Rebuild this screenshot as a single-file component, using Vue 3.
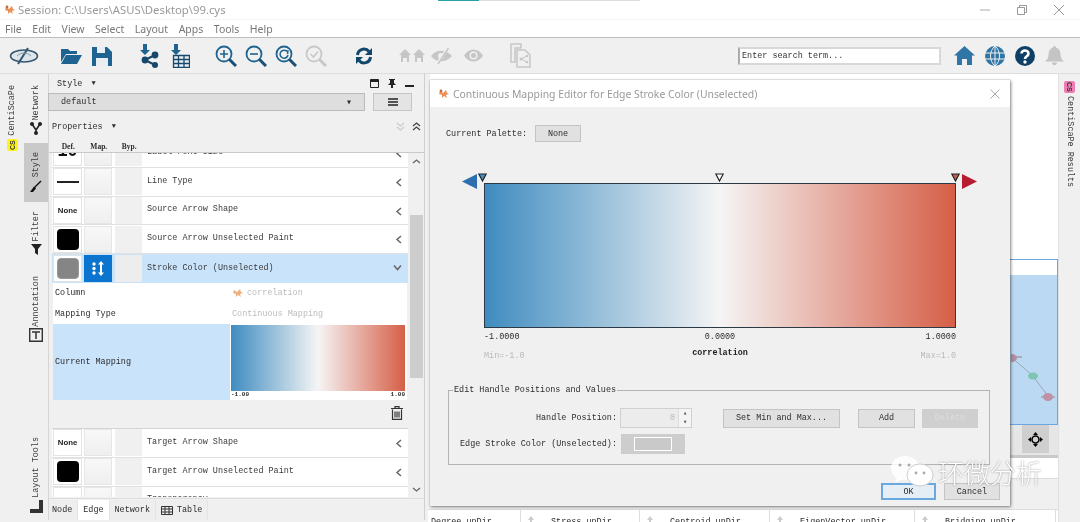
<script setup>
const menus = ['File', 'Edit', 'View', 'Select', 'Layout', 'Apps', 'Tools', 'Help']
const topRows = [
  { label: 'Line Type', def: 'line' },
  { label: 'Source Arrow Shape', def: 'none' },
  { label: 'Source Arrow Unselected Paint', def: 'black' }
]
const bottomRows = [
  { label: 'Target Arrow Shape', def: 'none' },
  { label: 'Target Arrow Unselected Paint', def: 'black' }
]
const tableCols = [
  { name: 'Degree unDir', w: 93, icon: false },
  { name: 'Stress unDir', w: 119, icon: true },
  { name: 'Centroid unDir', w: 130, icon: true },
  { name: 'EigenVector unDir', w: 145, icon: true },
  { name: 'Bridging unDir', w: 141, icon: true }
]
</script>

<template>
  <div class="app">
    <header class="titlebar">
      <svg class="cy" width="12" height="12" viewBox="0 0 12 12"><path d="M2 3l3 2 3-3 1 3 2 1-3 1 1 3-3-2-2 2V7L1 6z" fill="#e8925a"/><circle cx="3" cy="3" r="1.4" fill="#c9673a"/></svg>
      <span class="session">Session: C:\Users\ASUS\Desktop\99.cys</span>
      <div class="tabstrip"><i class="teal"></i><i class="graybar"></i></div>
      <div class="winbtns">
        <svg width="12" height="12" viewBox="0 0 12 12"><path d="M1 6h10" stroke="#aaa"/></svg>
        <svg width="12" height="12" viewBox="0 0 12 12"><path d="M1.500 3.500h7v7h-7zM3.500 3.500v-2h7v7h-2" fill="none" stroke="#999"/></svg>
        <svg width="12" height="12" viewBox="0 0 12 12"><path d="M1 1l10 10M11 1L1 11" stroke="#999"/></svg>
      </div>
    </header>

    <nav class="menubar">
      <span v-for="m in menus" :key="m">{{ m }}</span>
    </nav>

    <div class="toolbar">
      <svg class="t logo" width="30" height="20" viewBox="0 0 30 20"><ellipse cx="15" cy="10" rx="13.500" ry="6" fill="#dfe5ea" stroke="#34586f" stroke-width="1.500"/><path d="M19 2L9 18" stroke="#34586f" stroke-width="2"/><path d="M8 10c4-4 10-4 14 0" fill="none" stroke="#7f98a8"/></svg>
      <svg class="t g1" width="22" height="20" viewBox="0 0 22 20"><path d="M1 3h7l2 2h7v3H6L1 16z" fill="#1f6391"/><path d="M6 9h16l-5 9H1z" fill="#1f6391"/></svg>
      <svg class="t g2" width="20" height="20" viewBox="0 0 20 20"><path d="M0 1h15l5 5v14H0z" fill="#1f6391"/><path d="M5 1h8v6H5z" fill="#e8eef2"/><path d="M4 12h12v8H4z" fill="#e8eef2"/></svg>
      <svg class="t g3" width="19" height="24" viewBox="0 0 19 24"><path d="M3 0h4v6h3l-5 5-5-5h3z" fill="#1f6391"/><g stroke="#15486b" stroke-width="2"><path d="M5 16l10-5M5 16l10 5"/></g><circle cx="5" cy="16" r="3.400" fill="#15486b"/><circle cx="15" cy="11" r="3.400" fill="#15486b"/><circle cx="15" cy="21" r="3" fill="#15486b"/></svg>
      <svg class="t g4" width="20" height="24" viewBox="0 0 20 24"><path d="M4 0h4v6h3l-5 5-5-5h3z" fill="#1f6391"/><path d="M3.500 11.500h16v12h-16zM3.500 15.500h16M3.500 19.500h16M8.500 11.500v12M14 11.500v12" fill="#e8eef2" stroke="#15486b" stroke-width="1.300"/></svg>
      <svg class="t g5" width="22" height="22" viewBox="0 0 22 22"><circle cx="9" cy="9" r="7.500" fill="none" stroke="#1f6391" stroke-width="1.800"/><path d="M14.500 14.500L21 21" stroke="#1b4f73" stroke-width="3"/><path d="M5 9h8M9 5v8" stroke="#1f6391" stroke-width="1.600"/></svg>
      <svg class="t g6" width="22" height="22" viewBox="0 0 22 22"><circle cx="9" cy="9" r="7.500" fill="none" stroke="#1f6391" stroke-width="1.800"/><path d="M14.500 14.500L21 21" stroke="#1b4f73" stroke-width="3"/><path d="M5 9h8" stroke="#1f6391" stroke-width="1.600"/></svg>
      <svg class="t g6" width="22" height="22" viewBox="0 0 22 22"><circle cx="9" cy="9" r="7.500" fill="none" stroke="#1f6391" stroke-width="1.800"/><path d="M14.500 14.500L21 21" stroke="#1b4f73" stroke-width="3"/><path d="M12 6.500A4 4 0 1 0 13 10M10 5.500l3 .500-.5 3" fill="none" stroke="#1f6391" stroke-width="1.500"/></svg>
      <svg class="t g6" width="22" height="22" viewBox="0 0 22 22"><circle cx="9" cy="9" r="7.500" fill="none" stroke="#c8c8c8" stroke-width="1.800"/><path d="M14.500 14.500L21 21" stroke="#c8c8c8" stroke-width="3"/><path d="M5.500 9l3 3 4.500-5.500" fill="none" stroke="#c8c8c8" stroke-width="1.600"/></svg>
      <svg class="t g7" width="18" height="18" viewBox="0 0 18 18"><path d="M2.500 8A6.500 6.500 0 0 1 14 4.500" fill="none" stroke="#12476c" stroke-width="3"/><path d="M17 1v7h-7z" fill="#12476c"/><path d="M15.500 10A6.500 6.500 0 0 1 4 13.500" fill="none" stroke="#12476c" stroke-width="3"/><path d="M1 17v-7h7z" fill="#12476c"/></svg>
      <svg class="t g8" width="26" height="14" viewBox="0 0 26 14"><g fill="#c6c6c6"><path d="M6 0l6 6h-2v7H8V9H4v4H2V6H0zM20 0l6 6h-2v7h-2V9h-4v4h-2V6h-2z"/></g></svg>
      <svg class="t g9" width="25" height="18" viewBox="0 0 25 18"><path d="M1 9c5-7 15-7 21 0-6 7-16 7-21 0z" fill="#c6c6c6"/><circle cx="11" cy="9" r="3" fill="#f0f0f0"/><path d="M18 1L7 17" stroke="#f0f0f0" stroke-width="3"/><path d="M18.500 1L8 17" stroke="#c6c6c6" stroke-width="1.500"/></svg>
      <svg class="t g10" width="21" height="15" viewBox="0 0 21 15"><path d="M1 7.500c5-8 14-8 19 0-5 8-14 8-19 0z" fill="#c6c6c6"/><circle cx="10.500" cy="7.500" r="4" fill="#f0f0f0"/><circle cx="10.500" cy="7.500" r="2.500" fill="#c6c6c6"/></svg>
      <svg class="t g11" width="22" height="25" viewBox="0 0 22 25"><path d="M1 1h10v4h-6v14H1zM7 7h8l5 5v12H7z" fill="none" stroke="#c6c6c6" stroke-width="1.500"/><path d="M11 16l6-3M11 16l6 3" stroke="#c6c6c6"/><circle cx="11" cy="16" r="1.500" fill="#c6c6c6"/><circle cx="17" cy="13" r="1.300" fill="#c6c6c6"/><circle cx="17" cy="19" r="1.300" fill="#c6c6c6"/></svg>
      <div class="search">Enter search term...</div>
      <svg class="t r1" width="21" height="19" viewBox="0 0 21 19"><path d="M10.500 0L21 9.500h-3V19h-5v-6H8v6H3V9.500H0z" fill="#2f75a5"/></svg>
      <svg class="t r2" width="20" height="20" viewBox="0 0 20 20"><circle cx="10" cy="10" r="10" fill="#2f75a5"/><path d="M0 7h20M0 13h20M10 0v20M10 0c-6 5-6 15 0 20M10 0c6 5 6 15 0 20" fill="none" stroke="#f0f0f0" stroke-width="1"/></svg>
      <svg class="t r2" width="20" height="20" viewBox="0 0 20 20"><circle cx="10" cy="10" r="10" fill="#0e3f66"/><path d="M6.500 7.500C6.500 3.500 13.500 3.500 13.500 7.500c0 3-3.500 2.500-3.500 5.500" fill="none" stroke="#fff" stroke-width="2.600"/><circle cx="10" cy="16" r="1.700" fill="#fff"/></svg>
      <svg class="t r2" width="19" height="20" viewBox="0 0 19 20"><path d="M9.500 0c1 0 1.500 1 1.500 1.500 3 1 4.500 3.500 4.500 7 0 3 1 5 3.500 7H0c2.500-2 3.500-4 3.500-7 0-3.500 1.500-6 4.500-7C8 1 8.500 0 9.500 0zM7 16.500h5c0 3.500-5 3.500-5 0z" fill="#c4c4c4"/></svg>
    </div>

    <div class="main">
      <aside class="lefttabs">
        <div class="col col1">
          <span class="vt">CentiScaPe</span>
          <b class="badge yellow">CS</b>
        </div>
        <div class="col col2">
          <div class="tab t-net">
            <span class="vt">Network</span>
            <svg width="12" height="13" viewBox="0 0 12 13"><path d="M2 2l4 6 4-6M6 8v3" stroke="#222" stroke-width="1.600" fill="none"/><circle cx="2" cy="2" r="2" fill="#222"/><circle cx="10" cy="2" r="2" fill="#222"/><circle cx="6" cy="11" r="2" fill="#222"/></svg>
          </div>
          <div class="tab t-style">
            <span class="vt">Style</span>
            <svg width="12" height="12" viewBox="0 0 12 12"><path d="M11 1L4 8" stroke="#111" stroke-width="1.500"/><path d="M4 6.500L6 8.500 3 12H0z" fill="#111"/></svg>
          </div>
          <div class="tab t-filter">
            <span class="vt">Filter</span>
            <svg width="11" height="11" viewBox="0 0 11 11"><path d="M0 0h11L7 5v6L4 9V5z" fill="#222"/></svg>
          </div>
          <div class="tab t-ann">
            <span class="vt">Annotation</span>
            <svg width="14" height="14" viewBox="0 0 14 14"><path d="M.7.700h12.600v12.600H.7z" fill="none" stroke="#333" stroke-width="1.400"/><path d="M3 4h8M7 4v7" stroke="#333" stroke-width="1.500"/></svg>
          </div>
          <div class="tab t-layout">
            <span class="vt">Layout Tools</span>
            <svg width="13" height="13" viewBox="0 0 13 13"><path d="M9 0h4v13H0V9h9z" fill="#333"/></svg>
          </div>
        </div>
      </aside>

      <section class="panel">
        <div class="panelhead">
          <span class="mono">Style <i class="tri">▼</i></span>
          <div class="panelicons">
            <svg width="9" height="9" viewBox="0 0 9 9"><path d="M.5.500h8v8h-8z" fill="none" stroke="#222"/><path d="M0 2h9" stroke="#222" stroke-width="2"/></svg>
            <svg width="8" height="9" viewBox="0 0 8 9"><path d="M1 0h6v1H6v3l2 2H5v3H3V6H0l2-2V1H1z" fill="#222"/></svg>
            <svg width="9" height="9" viewBox="0 0 9 9"><path d="M0 6h9v2H0z" fill="#222"/></svg>
          </div>
        </div>
        <div class="stylebar">
          <div class="select"><span>default</span><span class="caret">▾</span></div>
          <div class="burger"><svg width="10" height="8" viewBox="0 0 10 8"><path d="M0 1h10M0 4h10M0 7h10" stroke="#222" stroke-width="1.300"/></svg></div>
        </div>
        <div class="prophead">
          <span class="mono">Properties <i class="tri">▼</i></span>
          <div class="chev">
            <svg width="9" height="9" viewBox="0 0 9 9"><path d="M1 1l3.500 3L8 1M1 5l3.500 3L8 5" fill="none" stroke="#ccc" stroke-width="1.300"/></svg>
            <svg width="9" height="9" viewBox="0 0 9 9"><path d="M1 4l3.500-3L8 4M1 8l3.500-3L8 8" fill="none" stroke="#444" stroke-width="1.300"/></svg>
          </div>
        </div>
        <div class="dmb"><b>Def.</b><b>Map.</b><b>Byp.</b></div>

        <div class="listwrap">
          <div class="list">
            <div class="row first">
              <div class="cell def fontsize">10</div><div class="cell map"></div><div class="cell byp"></div>
              <span class="lbl">Label Font Size</span>
              <svg class="ch" width="7" height="9" viewBox="0 0 7 9"><path d="M6 1L2 4.500 6 8" fill="none" stroke="#666" stroke-width="1.500"/></svg>
            </div>
            <div class="row" v-for="r in topRows" :key="r.label">
              <div class="cell def">
                <i v-if="r.def === 'line'" class="linei"></i>
                <span v-else-if="r.def === 'none'" class="none">None</span>
                <i v-else class="swatch blk"></i>
              </div>
              <div class="cell map"></div><div class="cell byp"></div>
              <span class="lbl">{{ r.label }}</span>
              <svg class="ch" width="7" height="9" viewBox="0 0 7 9"><path d="M6 1L2 4.500 6 8" fill="none" stroke="#666" stroke-width="1.500"/></svg>
            </div>
            <div class="row active">
              <div class="cell def"><i class="swatch gry"></i></div>
              <div class="cell mapon"><svg width="14" height="15" viewBox="0 0 14 15"><g fill="#fff"><circle cx="3" cy="3" r="1.700"/><circle cx="3" cy="7.500" r="1.700"/><circle cx="3" cy="12" r="1.700"/><path d="M10 0l3 3.500h-2v8h2L10 15l-3-3.500h2v-8H7z"/></g></svg></div>
              <div class="cell byp"></div>
              <span class="lbl">Stroke Color (Unselected)</span>
              <svg class="ch" width="9" height="7" viewBox="0 0 9 7"><path d="M1 1.500l3.500 4 3.500-4" fill="none" stroke="#666" stroke-width="1.500"/></svg>
            </div>
            <div class="mapping">
              <div class="mrow"><span class="k">Column</span><span class="v"><svg width="12" height="12" viewBox="0 0 12 12"><path d="M2 3l3 2 3-3 1 3 2 1-3 1 1 3-3-2-2 2V7L1 6z" fill="#efb080"/></svg>correlation</span></div>
              <div class="mrow"><span class="k">Mapping Type</span><span class="v">Continuous Mapping</span></div>
              <div class="mrow tall">
                <span class="k blue">Current Mapping</span>
                <div class="mini">
                  <div class="grad minigrad"></div>
                  <div class="ticks"><span>-1.00</span><span>1.00</span></div>
                </div>
              </div>
              <div class="trash"><svg width="12" height="14" viewBox="0 0 12 14"><path d="M0 2.500h12M4 2V.7h4V2M1.500 3.500v9.800h9V3.500M4 5.500v6M6 5.500v6M8 5.500v6" fill="none" stroke="#333" stroke-width="1.200"/></svg></div>
            </div>
            <div class="row" v-for="r in bottomRows" :key="r.label">
              <div class="cell def">
                <span v-if="r.def === 'none'" class="none">None</span>
                <i v-else class="swatch blk"></i>
              </div>
              <div class="cell map"></div><div class="cell byp"></div>
              <span class="lbl">{{ r.label }}</span>
              <svg class="ch" width="7" height="9" viewBox="0 0 7 9"><path d="M6 1L2 4.500 6 8" fill="none" stroke="#666" stroke-width="1.500"/></svg>
            </div>
            <div class="row">
              <div class="cell def"></div><div class="cell map"></div><div class="cell byp"></div>
              <span class="lbl">Transparency</span>
            </div>
          </div>
          <div class="scroll">
            <svg width="9" height="7" viewBox="0 0 9 7"><path d="M1 5l3.500-3L8 5" fill="none" stroke="#666" stroke-width="1.300"/></svg>
            <div class="thumb"></div>
            <svg class="sd" width="9" height="7" viewBox="0 0 9 7"><path d="M1 2l3.500 3L8 2" fill="none" stroke="#666" stroke-width="1.300"/></svg>
          </div>
        </div>

        <div class="bottomtabs">
          <span class="n">Node</span><span class="on">Edge</span><span>Network</span>
          <span class="tbl"><svg width="12" height="9" viewBox="0 0 12 9"><path d="M.5.500h11v8H.5zM.5 3h11M.5 6h11M4 .5v8M8 .5v8" fill="none" stroke="#333"/></svg>Table</span>
        </div>
      </section>

      <section class="center">
        <div class="ctop"></div>
        <div class="netview">
          <div class="netstripe"></div>
          <svg class="netgraph" width="44" height="150" viewBox="0 0 44 150">
            <path d="M0 83l21 18 16 21" stroke="#9aa7b5" fill="none"/>
            <path d="M-1 83h12M30 123h14" stroke="#888"/>
            <ellipse cx="1" cy="84" rx="5" ry="4" fill="#b48fa0"/>
            <ellipse cx="22" cy="102" rx="5" ry="3.500" fill="#7fc4b0"/>
            <ellipse cx="37" cy="123" rx="5" ry="4" fill="#c090a5"/>
          </svg>
        </div>
        <div class="navrow">
          <div class="navbtn"><svg width="15" height="15" viewBox="0 0 15 15"><path d="M7.500 0l2.500 3H5zM7.500 15L5 12h5zM0 7.500L3 5v5zM15 7.500L12 10V5z" fill="#000"/><circle cx="7.500" cy="7.500" r="3.500" fill="none" stroke="#000" stroke-width="1.600"/></svg></div>
        </div>
        <div class="cgray"></div>
        <div class="cwhite"></div>
        <div class="cfill"></div>
        <div class="tablehead">
          <span v-for="c in tableCols" :key="c.name" :class="{ ic: c.icon }" :style="{ width: c.w + 'px' }"><svg v-if="c.icon" width="8" height="8" viewBox="0 0 8 8"><path d="M4 0l3 4H5v4H3V4H1z" fill="#ccc"/></svg>{{ c.name }}</span>
        </div>
      </section>

      <aside class="righttabs">
        <b class="badge pink">CS</b>
        <span class="vtr">CentiScaPe Results</span>
      </aside>
    </div>

    <div class="dialog">
      <div class="dtitle">
        <svg width="12" height="12" viewBox="0 0 12 12"><path d="M2 3l3 2 3-3 1 3 2 1-3 1 1 3-3-2-2 2V7L1 6z" fill="#e8925a"/><circle cx="3" cy="3" r="1.400" fill="#c9673a"/></svg>
        <span class="dt">Continuous Mapping Editor for Edge Stroke Color (Unselected)</span>
        <svg class="dx" width="10" height="10" viewBox="0 0 10 10"><path d="M.5.500l9 9M9.500.500l-9 9" stroke="#aaa"/></svg>
      </div>
      <div class="dbody">
        <div class="palette"><span>Current Palette:</span><button class="btn pal">None</button></div>
        <div class="editor">
          <div class="handles">
            <svg class="arrow al" width="15" height="15" viewBox="0 0 15 15"><path d="M0 7.500L15 0v15z" fill="#2e6fb0"/></svg>
            <svg class="h h1" width="9" height="9" viewBox="0 0 9 9"><path d="M.8 1h7.400L4.500 8z" fill="#4a8fc0" stroke="#222" stroke-width="1.200"/></svg>
            <svg class="h h2" width="9" height="9" viewBox="0 0 9 9"><path d="M.8 1h7.400L4.500 8z" fill="#fff" stroke="#222" stroke-width="1.200"/></svg>
            <svg class="h h3" width="9" height="9" viewBox="0 0 9 9"><path d="M.8 1h7.400L4.500 8z" fill="#c0604f" stroke="#222" stroke-width="1.200"/></svg>
            <svg class="arrow ar" width="15" height="15" viewBox="0 0 15 15"><path d="M15 7.500L0 0v15z" fill="#b71c30"/></svg>
          </div>
          <div class="grad bigbar"></div>
          <div class="scale"><span>-1.0000</span><span>0.0000</span><span class="end">1.0000</span></div>
          <div class="range"><span class="dim">Min=-1.0</span><b>correlation</b><span class="dim end">Max=1.0</span></div>
        </div>
        <fieldset class="fs">
          <legend>Edit Handle Positions and Values</legend>
          <div class="fr fr1">
            <label class="l1">Handle Position:</label>
            <div class="spin"><span>0</span><div class="sb"><i>▴</i><i>▾</i></div></div>
            <button class="btn setmm">Set Min and Max...</button>
            <button class="btn add">Add</button>
            <button class="btn del">Delete</button>
          </div>
          <div class="fr fr2">
            <label class="l2">Edge Stroke Color (Unselected):</label>
            <div class="colorbtn"><i></i></div>
          </div>
        </fieldset>
        <div class="actions">
          <button class="btn ok">OK</button>
          <button class="btn cancel">Cancel</button>
        </div>
      </div>
    </div>

    <div class="watermark">
      <svg width="46" height="34" viewBox="0 0 46 34">
        <ellipse cx="15" cy="13" rx="14" ry="12" fill="#fff" opacity=".85"/>
        <path d="M7 22l-2 6 8-4z" fill="#fff" opacity=".85"/>
        <ellipse cx="30" cy="20" rx="13" ry="11" fill="#fff" stroke="#cfcfcf"/>
        <circle cx="10" cy="10" r="1.500" fill="#aaa"/><circle cx="19" cy="10" r="1.500" fill="#aaa"/>
        <circle cx="26" cy="18" r="1.400" fill="#aaa"/><circle cx="34" cy="18" r="1.400" fill="#aaa"/>
      </svg>
      <span>环微分析</span>
    </div>
  </div>
</template>

<style>
html, body { margin: 0; background: #fff; }
</style>

<style scoped>
.app { position: relative; width: 1080px; height: 522px; overflow: hidden; background: #f0f0f0; font-family: "Liberation Mono", monospace; font-size: 8.45px; color: #2c2c2c; filter: blur(.3px); }
.titlebar { position: relative; height: 19px; background: #fff; display: flex; align-items: center; padding-left: 4px; gap: 2px; }
.session { font: 11.300px "Noto Sans", sans-serif; color: #999; }
.tabstrip { position: absolute; left: 438px; top: 0; display: flex; }
.teal { display: block; width: 41px; height: 1px; background: #2aa3a8; }
.graybar { display: block; width: 161px; height: 1px; background: #ddd; }
.winbtns { position: absolute; right: 15px; top: 4px; display: flex; gap: 25px; }
.menubar { height: 19px; background: #fff; border-bottom: 1px solid #bdbdbd; border-top: 1px solid #f4f4f4; box-sizing: border-box; display: flex; align-items: center; padding-left: 5px; gap: 10.500px; font: 10.500px "Noto Sans", sans-serif; color: #777; }
.toolbar { height: 35px; background: #f0f0f0; border-bottom: 1px solid #ddd; display: flex; align-items: center; position: relative; }
.t { flex: none; }
.logo { margin-left: 9px; }
.g1 { margin-left: 21px; }
.g2 { margin-left: 10px; }
.g3 { margin-left: 28px; }
.g4 { margin-left: 11px; }
.g5 { margin-left: 25px; }
.g6 { margin-left: 8px; }
.g7 { margin-left: 28px; }
.g8 { margin-left: 26px; }
.g9 { margin-left: 5px; }
.g10 { margin-left: 8px; }
.g11 { margin-left: 26px; }
.search { margin-left: 206px; width: 197px; height: 14px; border: 2px solid #d8d8d8; border-left-color: #aaa; background: #fff; padding-left: 2px; line-height: 14px; color: #333; font-size: 8.450px; }
.r1 { margin-left: 13px; }
.r2 { margin-left: 10px; }

.main { display: flex; height: 448px; }
.lefttabs { width: 48px; flex: none; display: flex; background: #f0f0f0; }
.col { width: 24px; display: flex; flex-direction: column; align-items: center; }
.col1 { padding-top: 11px; color: #555; }
.vt { writing-mode: vertical-rl; transform: rotate(180deg); color: #3a3a3a; }
.badge { display: block; width: 11px; height: 12px; font: bold 7px "Liberation Sans", sans-serif; line-height: 12px; text-align: center; color: #333; writing-mode: vertical-rl; transform: rotate(180deg); }
.yellow { background: #fdf21e; margin-top: 3px; border-radius: 2px; }
.pink { background: #ee7db5; border-radius: 2px; transform: none; }
.tab { display: flex; flex-direction: column; align-items: center; width: 24px; gap: 2px; }
.t-net { margin-top: 11px; }
.t-style { margin-top: 8px; background: #c9c9c9; height: 59px; padding-top: 9px; box-sizing: border-box; }
.t-filter { margin-top: 9px; }
.t-ann { margin-top: 21px; }
.t-layout { margin-top: 95px; }

.panel { width: 377px; flex: none; border-left: 1px solid #d5d5d5; border-right: 1px solid #cfcfcf; box-sizing: border-box; display: flex; flex-direction: column; height: 446px; }
.mono { color: #2c2c2c; }
.tri { font-style: normal; font-size: 7px; margin-left: 4px; position: relative; top: -1px; }
.panelhead { height: 19px; display: flex; align-items: center; padding-left: 8px; }
.panelicons { margin-left: auto; margin-right: 10px; display: flex; gap: 9px; align-items: center; }
.stylebar { display: flex; height: 18px; margin-left: -1px; gap: 8px; }
.select { width: 317px; background: #dedede; border: 1px solid #bbb; display: flex; justify-content: space-between; align-items: center; padding: 0 12px 0 12px; box-sizing: border-box; color: #2c2c2c; }
.caret { font-size: 10px; }
.burger { width: 39px; background: #e4e4e4; border: 1px solid #c5c5c5; box-sizing: border-box; display: flex; align-items: center; justify-content: center; }
.prophead { margin-top: 6px; height: 19px; display: flex; align-items: center; padding-left: 3px; }
.chev { margin-left: auto; margin-right: 3px; display: flex; gap: 7px; }
.dmb { height: 16px; display: flex; padding: 6px 0 0 4px; box-sizing: border-box; font: bold 7.500px/10px "Liberation Serif", serif; }
.dmb b { width: 30.500px; text-align: center; color: #2c2c2c; }
.listwrap { height: 345px; display: flex; border-top: 1px solid #c9c9c9; box-sizing: border-box; padding-left: 3px; overflow: hidden; }
.list { width: 356px; flex: none; overflow: hidden; background: #f0f0f0; }
.row { position: relative; height: 28.800px; background: #fff; border-bottom: 1px solid #e0e0e0; box-sizing: border-box; display: flex; align-items: center; padding-left: 1px; }
.row.first { margin-top: -14px; }
.cell { width: 29px; height: 27px; flex: none; box-sizing: border-box; margin-right: 2px; display: flex; align-items: center; justify-content: center; }
.def { border: 1px solid #e3e3e3; background: #fff; }
.map { border: 1px solid #e6e6e6; background: linear-gradient(#f8f8f8, #efefef); width: 28px; margin-right: 3px; }
.byp { background: #f0f0f0; width: 27px; margin-right: 5px; }
.mapon { background: #0a74cf; width: 28px; margin-right: 3px; }
.fontsize { font: bold 18px "Liberation Sans", sans-serif; color: #111; align-items: flex-start; }
.linei { display: block; width: 22px; height: 2px; background: #222; }
.none { font: bold 7.800px "Liberation Sans", sans-serif; color: #222; }
.swatch { display: block; width: 22px; height: 21px; border-radius: 4px; }
.blk { background: #000; }
.gry { background: #858585; border: 1px solid #999; box-sizing: border-box; }
.lbl { color: #3a3a3a; position: relative; top: -1px; }
.ch { position: absolute; right: 6px; top: 10px; }
.active { background: #c9e3fb; border-bottom: none; }
.active .byp { background: #ededed; }
.mapping { background: #f0f0f0; height: 146px; border-bottom: 1px solid #d4d4d4; box-sizing: border-box; padding: 0 0 0 1px; }
.mrow { display: flex; height: 20.500px; align-items: center; background: #fff; width: 354px; }
.k { width: 177px; padding-left: 2px; flex: none; box-sizing: border-box; color: #2c2c2c; }
.v { color: #bcbcbc; display: flex; align-items: center; gap: 3px; padding-left: 2px; }
.tall { height: 76px; align-items: stretch; }
.blue { background: #c9e3fb; display: flex; align-items: center; }
.mini { flex: 1; padding: 1px 0 0 1px; background: #fff; }
.minigrad { height: 66px; width: 174px; }
.ticks { display: flex; justify-content: space-between; width: 174px; font-size: 6px; line-height: 8px; font-weight: bold; }
.grad { background: linear-gradient(90deg, #3f8cc0 0%, #f5f5f5 50%, #d65f47 100%); }
.trash { display: flex; justify-content: flex-end; padding: 6px 5px 0 0; }
.scroll { width: 13px; background: #f0f0f0; display: flex; flex-direction: column; align-items: center; padding-top: 5px; margin-left: 2px; position: relative; }
.thumb { position: absolute; top: 62px; left: 0; width: 13px; height: 163px; background: #cdcdcd; }
.sd { margin-top: auto; margin-bottom: 4px; }
.bottomtabs { display: flex; height: 21px; align-items: center; padding-left: 0; border-top: 1px solid #ddd; box-sizing: border-box; margin-top: 1px; }
.bottomtabs span { display: flex; align-items: center; height: 20px; padding: 0 5px; gap: 4px; background: #eee; border-right: 1px solid #e4e4e4; position: relative; top: 1px; }
.bottomtabs .n { padding-left: 3px; }
.bottomtabs .on { background: #fff; }
.bottomtabs .tbl { margin-left: 0; }

.center { flex: 1; display: flex; flex-direction: column; background: #f0f0f0; padding-left: 5px; }
.ctop { height: 185px; background: #fff; }
.netview { position: relative; height: 167px; background: #bcd9f3; border: 1px solid #6aa6e0; box-sizing: border-box; overflow: hidden; }
.netstripe { height: 15px; background: #fff; }
.netgraph { position: absolute; right: 2px; top: 14px; }
.navrow { height: 30px; display: flex; justify-content: flex-end; padding-right: 9px; background: #e6e6e6; }
.navbtn { width: 27px; height: 28px; background: #cfcfcf; display: flex; align-items: center; justify-content: center; }
.cgray { height: 3px; background: #c9c9c9; }
.cwhite { height: 20px; background: #fff; border-bottom: 1px solid #ddd; }
.cfill { height: 30px; background: #f0f0f0; }
.tablehead { height: 12px; background: #fff; display: flex; margin-left: -2px; font-size: 8.450px; border-top: 1px solid #ddd; }
.tablehead span { display: flex; align-items: flex-start; box-sizing: border-box; border-right: 1px solid #ddd; padding: 7px 0 0 3px; white-space: nowrap; flex: none; }
.tablehead .ic { padding-left: 6px; }
.tablehead svg { margin: -1px 16px 0 0; flex: none; }
.righttabs { width: 22px; flex: none; background: #f0f0f0; border-left: 1px solid #e0e0e0; box-sizing: border-box; display: flex; flex-direction: column; align-items: center; padding-top: 7px; gap: 3px; }
.vtr { writing-mode: vertical-rl; color: #3a3a3a; }

.dialog { position: absolute; left: 430px; top: 80px; width: 580px; height: 426px; background: #f0f0f0; box-shadow: 1px 1px 3px rgba(0,0,0,.45), 0 0 1px rgba(0,0,0,.4); display: flex; flex-direction: column; }
.dtitle { height: 27px; background: #fff; display: flex; align-items: center; padding-left: 8px; gap: 3px; flex: none; }
.dt { font: 10.400px "Noto Sans", sans-serif; color: #999; }
.dx { margin-left: auto; margin-right: 10px; }
.dbody { flex: 1; display: flex; flex-direction: column; padding-left: 16px; }
.palette { display: flex; align-items: center; margin-top: 18px; gap: 8px; height: 17px; }
button { font: inherit; color: #2c2c2c; padding: 0; }
.btn { background: #e1e1e1; border: 1px solid #c4c4c4; box-sizing: border-box; }
.pal { width: 46px; height: 17px; }
.editor { width: 472px; margin: 31px 0 0 38px; }
.handles { position: relative; height: 10px; }
.arrow { position: absolute; top: 1px; }
.al { left: -22px; }
.ar { right: -21px; }
.h { position: absolute; top: 0; }
.h1 { left: -6px; }
.h2 { left: 231px; }
.h3 { right: -4px; }
.bigbar { height: 145px; border: 1px solid #2b3a44; box-sizing: border-box; }
.scale { display: grid; grid-template-columns: 1fr auto 1fr; margin-top: 4px; line-height: 10px; color: #2c2c2c; }
.range { display: grid; grid-template-columns: 1fr auto 1fr; margin-top: 9px; line-height: 10px; align-items: center; }
.end { text-align: right; }
.dim { color: #b9b9b9; }
.range b { color: #222; position: relative; top: -3px; }
.fs { width: 542px; height: 80px; margin: 24px 0 0 2px; border: 1px solid #b4b4b4; padding: 0; box-sizing: border-box; }
.fs legend { margin-left: 4px; padding: 0 1px; line-height: 10px; font-size: 8.450px; }
.fr { display: flex; align-items: center; position: relative; }
.fr1 { height: 20px; margin-top: 13px; }
.fr2 { height: 20px; margin-top: 6px; }
.l1 { width: 168px; text-align: right; margin-right: 3px; flex: none; }
.l2 { width: 168px; text-align: right; margin-right: 4px; white-space: nowrap; flex: none; }
.spin { width: 72px; height: 20px; background: #ececec; border: 1px solid #d0d0d0; box-sizing: border-box; display: flex; align-items: center; justify-content: flex-end; color: #bbb; }
.sb { width: 12px; height: 18px; margin-left: 3px; background: #f4f4f4; border-left: 1px solid #ddd; display: flex; flex-direction: column; color: #555; font-size: 7px; line-height: 9px; text-align: center; }
.sb i { font-style: normal; }
.setmm { width: 117px; height: 19px; margin-left: 31px; background: #e1e1e1; }
.add { width: 57px; height: 19px; margin-left: 18px; }
.del { width: 56px; height: 19px; margin-left: 7px; background: #cfcfcf; color: #ddd; border-color: #cfcfcf; }
.colorbtn { width: 64px; height: 20px; background: #cdcdcd; display: flex; align-items: center; justify-content: center; }
.colorbtn i { display: block; width: 36px; height: 12px; background: #c9c9c9; border: 1px solid #fff; }
.actions { display: flex; justify-content: flex-end; gap: 8px; margin: 18px 10px 0 0; }
.ok { width: 55px; height: 17px; border: 2px solid #6aa9e0; background: #e6eef5; }
.cancel { width: 56px; height: 17px; }

.watermark { position: absolute; left: 890px; top: 455px; display: flex; align-items: center; gap: 2px; color: #fff; font: 300 26px "Noto Sans CJK SC", sans-serif; line-height: 34px; text-shadow: 0 0 2px rgba(90,90,90,.7); }
</style>
